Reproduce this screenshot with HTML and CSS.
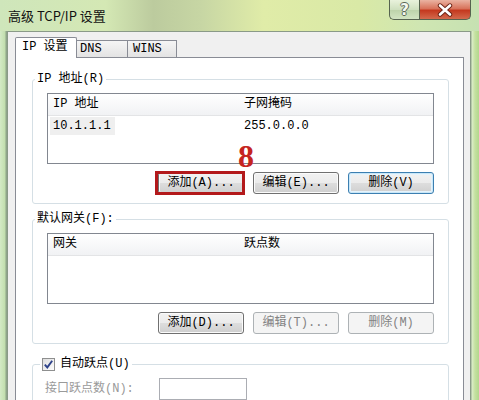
FILE: index.html
```html
<!DOCTYPE html>
<html lang="zh-CN">
<head>
  <meta charset="UTF-8" />
  <title>高级 TCP/IP 设置</title>
  <link rel="stylesheet" href="styles.css">
</head>
<body>

  <div class="window">

    <!-- Title bar -->
    <div class="titlebar">
      <span class="title">高级 TCP/IP 设置</span>
      <div class="caption">
        <button class="cap help" title="帮助">?</button>
        <button class="cap close" title="关闭">
          <svg width="20" height="14" viewBox="0 0 20 14">
            <path d="M5 2.5 L15 11.5 M15 2.5 L5 11.5" stroke="#6b2416" stroke-width="4.4" stroke-linecap="round" />
            <path d="M5 2.5 L15 11.5 M15 2.5 L5 11.5" stroke="#ffffff" stroke-width="2.6" stroke-linecap="round" />
          </svg>
        </button>
      </div>
    </div>

    <!-- Dialog body -->
    <div class="client">
      <div class="tabs">
        <div class="tab active">IP 设置</div>
        <div class="tab">DNS</div>
        <div class="tab wins">WINS</div>
      </div>

      <div class="panel">

        <fieldset class="group">
          <legend>IP 地址(R)</legend>
          <div class="list">
            <div class="list-head"><span>IP 地址</span><span>子网掩码</span></div>
            <div class="list-row"><span><span class="sel">10.1.1.1</span></span><span>255.0.0.0</span></div>
          </div>
          <div class="actions">
            <span class="marked">
              <button class="btn">添加(A)...</button>
              <span class="mark-num">8</span>
            </span>
            <button class="btn">编辑(E)...</button>
            <button class="btn default">删除(V)</button>
          </div>
        </fieldset>

        <fieldset class="group">
          <legend>默认网关(F):</legend>
          <div class="list">
            <div class="list-head"><span>网关</span><span>跃点数</span></div>
          </div>
          <div class="actions">
            <button class="btn">添加(D)...</button>
            <button class="btn" disabled>编辑(T)...</button>
            <button class="btn" disabled>删除(M)</button>
          </div>
        </fieldset>

        <fieldset class="group metric-group">
          <legend class="check-legend">
            <span class="check">
              <svg width="11" height="11" viewBox="0 0 11 11">
                <path d="M1.8 5.6 L4.3 8.4 L9.2 1.8" fill="none" stroke="#2f438a" stroke-width="1.9" />
              </svg>
            </span>
            自动跃点(U)
          </legend>
          <div class="metric">
            <span class="metric-label">接口跃点数(N):</span>
            <input class="metric-input" type="text" disabled />
          </div>
        </fieldset>

      </div>
    </div>
  </div>

</body>
</html>
```

FILE: styles.css
```css
* { box-sizing: border-box; }
body { margin: 0; background: #c6e0b0; }

.window {
  width: 479px;
  height: 400px;
  overflow: hidden;
  display: flex;
  flex-direction: column;
  font: 12px/16px "Liberation Mono", "Noto Sans CJK SC", monospace;
  color: #000;
  background: linear-gradient(90deg, #d4eac6 0, #c2deae 5px, #8fa58a 6px, #8fa58a 7px,
    #bfdcab 7px, #bfdcab 470px, #8fa58a 471px, #dceec8 472px, #c4e1a0 475px, #b3d68d 479px);
}

/* TITLE BAR */
.titlebar {
  height: 31px;
  flex: none;
  display: flex;
  align-items: flex-start;
  padding: 0 8px 0 8px;
  background: linear-gradient(90deg, #cfe6bb 0%, #d4e8b4 22%, #bccb9e 32%, #c7d6a4 42%,
    #e0eca8 55%, #d9e9a6 75%, #cfe6b2 88%, #c6e1b2 100%);
}

.title {
  padding-top: 7px;
  font: 13px/18px "Noto Sans CJK SC", sans-serif;
  color: #111;
}

.caption {
  margin-left: auto;
  display: flex;
  height: 20px;
}

.cap {
  height: 20px;
  margin: 0;
  padding: 0;
  border: 1px solid #56634f;
  border-top: none;
  cursor: pointer;
  display: flex;
  align-items: center;
  justify-content: center;
}

.help {
  width: 30px;
  border-right: none;
  border-bottom-left-radius: 5px;
  background: linear-gradient(#e9f2dc, #cfe0bf 50%, #bcd2a9 51%, #d2e4c2);
  font: bold 15px/18px "DejaVu Sans", sans-serif;
  color: #f4f8f0;
  text-shadow: 1px 0 #5b6858, -1px 0 #5b6858, 0 1px #5b6858, 0 -1px #5b6858;
}

.close {
  width: 52px;
  border-bottom-right-radius: 5px;
  background: linear-gradient(#eab3a2, #d8735b 45%, #c4391f 55%, #d36a4d);
}

/* CLIENT AREA */
.client {
  flex: 1;
  margin: 0 8px 0 7px;
  padding: 5px 6px 0 7px;
  border: 1px solid #8a9a88;
  border-bottom: none;
  background: #f0f0f0;
  display: flex;
  flex-direction: column;
}

.tabs {
  display: flex;
  align-items: flex-end;
  height: 20px;
  flex: none;
}

.tab {
  height: 17px;
  padding-left: 3px;
  border: 1px solid #898c95;
  border-left: none;
  border-bottom: none;
  line-height: 16px;
  background: linear-gradient(#f5f5f5, #e3e3e3);
}

.tab.active {
  width: 62px;
  height: 21px;
  margin-bottom: -1px;
  padding-left: 6px;
  border-left: 1px solid #898c95;
  border-radius: 2px 2px 0 0;
  line-height: 19px;
  background: #fff;
  position: relative;
  z-index: 1;
}

.tab:nth-child(2) { width: 51px; }
.tab.wins { width: 49px; padding-left: 5px; }

.panel {
  flex: 1;
  border: 1px solid #898c95;
  border-bottom: none;
  background: #fff;
  padding: 13px 14px 0 16px;
}

/* GROUP BOXES */
.group {
  margin: 0 0 7px 0;
  padding: 6px 14px 9px 14px;
  border: 1px solid #d5dfe5;
  border-radius: 3px;
  min-inline-size: 0;
}

.group legend {
  margin-left: -12px;
  padding: 0 2px;
  line-height: 16px;
}

.metric-group { margin-top: 12px; }

.check-legend {
  display: flex;
  align-items: center;
  gap: 5px;
}

.group .check-legend { margin-left: -7px; }

.check {
  width: 13px;
  height: 13px;
  border: 1px solid #8e8f8f;
  background: linear-gradient(135deg, #dedede, #fdfdfd);
  display: flex;
  align-items: center;
  justify-content: center;
}

/* LIST VIEWS */
.list {
  height: 71px;
  border: 1px solid #828790;
  background: #fff;
}

.list-head, .list-row {
  display: grid;
  grid-template-columns: 191px 1fr;
}

.list-head {
  height: 22px;
  line-height: 21px;
  border-bottom: 1px solid #e3e4e6;
  background: linear-gradient(#ffffff, #f1f2f4);
}

.list-row {
  height: 18px;
  margin-top: 1px;
  line-height: 18px;
}

.list-head span, .list-row > span { padding-left: 5px; }

.sel {
  display: inline-block;
  margin-left: -3px;
  padding: 0 4px 0 3px;
  background: #efefef;
}

/* BUTTONS */
.actions {
  display: flex;
  justify-content: flex-end;
  gap: 9px;
  margin-top: 8px;
}

.btn {
  width: 86px;
  height: 22px;
  margin: 0;
  padding: 0;
  font: inherit;
  color: #000;
  border: 1px solid #707070;
  border-radius: 3px;
  background: linear-gradient(#f2f2f2, #ebebeb 50%, #dddddd 51%, #cfcfcf);
  box-shadow: inset 0 0 0 1px #fbfbfb;
  cursor: pointer;
}

.btn.default {
  border-color: #3c7fb1;
  box-shadow: inset 0 0 0 1px #c9e7f8, inset 0 0 0 2px #e6f3fb;
}

.btn:disabled {
  color: #838383;
  border-color: #adb2b5;
  background: #f4f4f4;
  box-shadow: none;
  cursor: default;
}

/* RED ANNOTATION */
.marked {
  position: relative;
  display: flex;
}

.marked::after {
  content: "";
  position: absolute;
  top: -1px;
  right: -1px;
  bottom: -1px;
  left: -3px;
  border: 3px solid #b3191b;
  pointer-events: none;
}

.mark-num {
  position: absolute;
  left: 80px;
  top: -32px;
  font: bold 32px/32px "Liberation Serif", serif;
  color: #c52420;
}

/* AUTOMATIC METRIC */
.metric {
  display: flex;
  align-items: center;
}

.metric-label {
  width: 114px;
  margin-left: -2px;
  color: #9a9a9a;
}

.metric-input {
  width: 88px;
  height: 22px;
  border: 1px solid #abadb3;
  background: #fff;
}
```
